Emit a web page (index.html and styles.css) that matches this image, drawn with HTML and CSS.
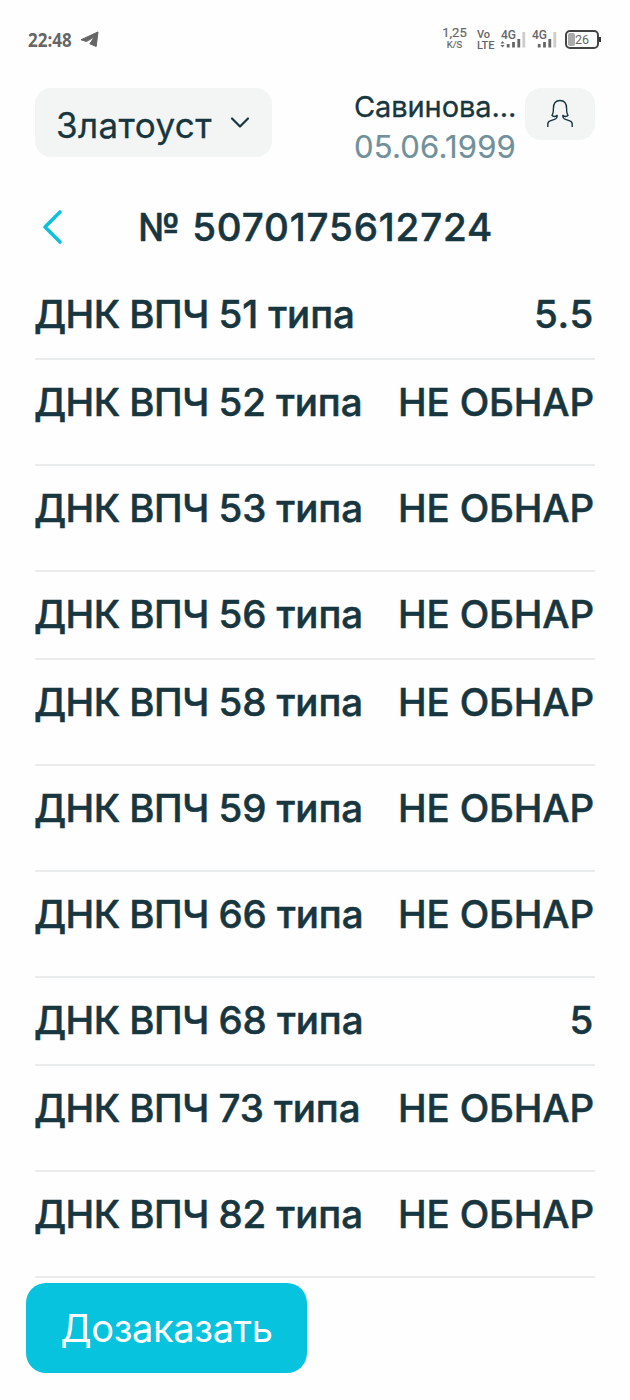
FILE: index.html
```html
<!DOCTYPE html>
<html lang="ru">
<head>
<meta charset="utf-8">
<title>Результаты</title>
<link rel="stylesheet" href="styles.css">
</head>
<body>
<div class="status">
  <span class="time">22:48</span>
  <svg class="plane" width="20" height="18" viewBox="0 0 20 18"><path d="M1 8.800 18 .9 16.200 15.500 9.800 12.800 14.500 5.800 6.500 10.500Z" fill="#666" stroke="#666" stroke-width="1" stroke-linejoin="round"/></svg>
  <div class="speed"><span class="speed-value">1,25</span><span class="speed-unit">K/S</span></div>
  <div class="volte"><span>Vo</span><span>LTE</span></div>
  <div class="signal"><span>4G</span>
    <svg width="28" height="20" viewBox="0 0 28 20"><path d="M.5 13.500 2.500 11l2 2.500ZM.5 15 2.500 17.500l2-2.500Z" fill="#666"/><path d="M8.2 14v3.500M13.500 12v5.500M18.800 9v8.500" stroke="#666" stroke-width="2.800"/><path d="M23.800 2v15.500" stroke="#ccc" stroke-width="2.800"/></svg>
  </div>
  <div class="signal second"><span>4G</span>
    <svg width="28" height="20" viewBox="0 0 28 20"><path d="M8.2 14v3.500M13.500 12v5.500M18.800 9v8.500" stroke="#666" stroke-width="2.800"/><path d="M23.800 2v15.500" stroke="#ccc" stroke-width="2.800"/></svg>
  </div>
  <div class="battery"><span class="charge"></span><span class="percent">26</span></div><span class="battery-tip"></span>
</div>
<header class="header">
  <div class="city"><span>Златоуст</span>
    <svg width="20" height="14" viewBox="0 0 20 14"><path d="m2 2.500 8 8 8-8" fill="none" stroke="#17363f" stroke-width="2.2" stroke-linecap="round" stroke-linejoin="round"/></svg>
  </div>
  <div class="patient"><span class="name">Савинова...</span><span class="birth">05.06.1999</span></div>
  <div class="avatar"><svg width="28" height="30" viewBox="0 0 28 30"><path d="M1.800 28v-3c0-1.800.8-2.700 2.400-3.200l4.300-1.500c1.700-.6 2.700-2.100 2.700-3.900-1.900 1.400-4.300 1.400-5.200-.1 1.300-1.600 1.400-3.800 1.400-6.800C7.400 4.600 9.900 1.500 14 1.500s6.600 3.100 6.600 8c0 3 .1 5.200 1.400 6.800-.9 1.500-3.300 1.500-5.200.1 0 1.800 1 3.300 2.700 3.900l4.300 1.500c1.600.5 2.400 1.400 2.400 3.200v3" fill="none" stroke="#17363f" stroke-width="1.400" stroke-linejoin="round"/></svg></div>
</header>
<div class="order">
  <svg class="back" width="22" height="36" viewBox="0 0 22 36"><path d="M18 3 3 18l15 15" fill="none" stroke="#0bc1dc" stroke-width="3.600" stroke-linecap="round" stroke-linejoin="round"/></svg>
  <h1 class="number">№ 5070175612724</h1>
</div>
<main class="results">
  <div class="row short"><span class="test"><span class="marker">ДНК ВПЧ </span>51 типа</span><span class="value num">5.5</span></div>
  <div class="row"><span class="test"><span class="marker">ДНК ВПЧ </span>52 типа</span><span class="value">НЕ ОБНАР</span></div>
  <div class="row"><span class="test"><span class="marker">ДНК ВПЧ </span>53 типа</span><span class="value">НЕ ОБНАР</span></div>
  <div class="row short"><span class="test"><span class="marker">ДНК ВПЧ </span>56 типа</span><span class="value">НЕ ОБНАР</span></div>
  <div class="row"><span class="test"><span class="marker">ДНК ВПЧ </span>58 типа</span><span class="value">НЕ ОБНАР</span></div>
  <div class="row"><span class="test"><span class="marker">ДНК ВПЧ </span>59 типа</span><span class="value">НЕ ОБНАР</span></div>
  <div class="row"><span class="test"><span class="marker">ДНК ВПЧ </span>66 типа</span><span class="value">НЕ ОБНАР</span></div>
  <div class="row short"><span class="test"><span class="marker">ДНК ВПЧ </span>68 типа</span><span class="value num">5</span></div>
  <div class="row"><span class="test"><span class="marker">ДНК ВПЧ </span>73 типа</span><span class="value">НЕ ОБНАР</span></div>
  <div class="row"><span class="test"><span class="marker">ДНК ВПЧ </span>82 типа</span><span class="value">НЕ ОБНАР</span></div>
</main>
<button class="reorder">Дозаказать</button>
</body>
</html>
```
FILE: styles.css
```css
* { box-sizing: border-box; }
body {
  margin: 0;
  width: 630px;
  height: 1400px;
  overflow: hidden;
  background: #fefefe;
  color: #17363f;
  font-family: Inter, "Liberation Sans", sans-serif;
  white-space: nowrap;
}
.status {
  display: flex;
  align-items: flex-start;
  height: 88px;
  padding: 28px 28px 0;
  color: #666;
  font-family: Roboto, sans-serif;
}
.time {
  width: 52px;
  font: 700 20px/24px "Open Sans", sans-serif;
  transform: scaleX(.85);
  transform-origin: left;
}
.plane { margin-top: 3px; }
.speed { display: flex; flex-direction: column; align-items: center; width: 25px; margin: -2px 0 0 342px; -webkit-text-stroke: .2px #666; }
.speed-value { font-size: 13px; line-height: 14px; }
.speed-unit { font-size: 9.500px; line-height: 10px; }
.volte { display: flex; flex-direction: column; width: 18px; margin: 1px 0 0 10px; font-size: 11px; font-weight: 500; line-height: 11px; }
.signal { position: relative; width: 28px; margin-left: 5px; }
.signal.second { margin-left: 3px; }
.signal span { position: absolute; left: 1px; top: 0; font-size: 12px; font-weight: 500; line-height: 14px; }
.signal svg { display: block; margin-top: 2px; }
.battery { position: relative; width: 34px; height: 19px; margin-left: 6px; margin-top: 2px; border: 2px solid #444; border-radius: 5px; }
.charge { display: block; width: 7px; height: 13px; margin: 1px; background: #aaa; border-radius: 2px; }
.percent { position: absolute; left: 8px; top: 0; font-size: 12.500px; line-height: 15px; }
.battery-tip { width: 2px; height: 5px; margin-top: 9px; background: #333; }
.header { display: flex; height: 108px; padding-left: 35px; }
.city { display: flex; align-items: center; width: 237px; height: 69px; padding-left: 21px; background: #f3f5f5; border-radius: 16px; font-size: 35px; -webkit-text-stroke: .3px #17363f; }
.city span { width: 174px; margin-top: 5px; letter-spacing: .4px; }
.patient { display: flex; flex-direction: column; width: 171px; margin-left: 82px; }
.name { font-size: 29px; line-height: 38px; letter-spacing: -.1px; -webkit-text-stroke: .3px #17363f; }
.birth { color: #70909c; font-size: 31px; line-height: 41px; letter-spacing: .2px; -webkit-text-stroke: .2px #70909c; }
.avatar { display: flex; align-items: center; justify-content: center; width: 70px; height: 52px; background: #f3f5f5; border-radius: 16px; }
.order { display: flex; height: 76px; padding: 13px 0 0 42px; }
.number { margin: -5px 0 0 74px; font-size: 38.500px; line-height: 46px; font-weight: 500; letter-spacing: .85px; -webkit-text-stroke: .5px #17363f; }
.results { width: 560px; margin-left: 35px; }
.row { display: flex; justify-content: space-between; height: 106px; padding-top: 18px; border-bottom: 2px solid #e9ebed; font-size: 38.500px; line-height: 48px; font-weight: 500; -webkit-text-stroke: .5px #17363f; }
.row.short { height: 88px; }
.test { margin-left: -1px; letter-spacing: -.1px; }
.marker { letter-spacing: -.55px; }
.value { margin-right: 1px; letter-spacing: -.15px; }
.value.num { letter-spacing: .7px; }
.reorder { display: block; width: 281px; height: 90px; margin: 5px 0 0 26px; padding: 0; background: #07c3de; color: #fff; border: 0; border-radius: 20px; font: 400 38px/90px Inter, sans-serif; letter-spacing: -.35px; }
```
